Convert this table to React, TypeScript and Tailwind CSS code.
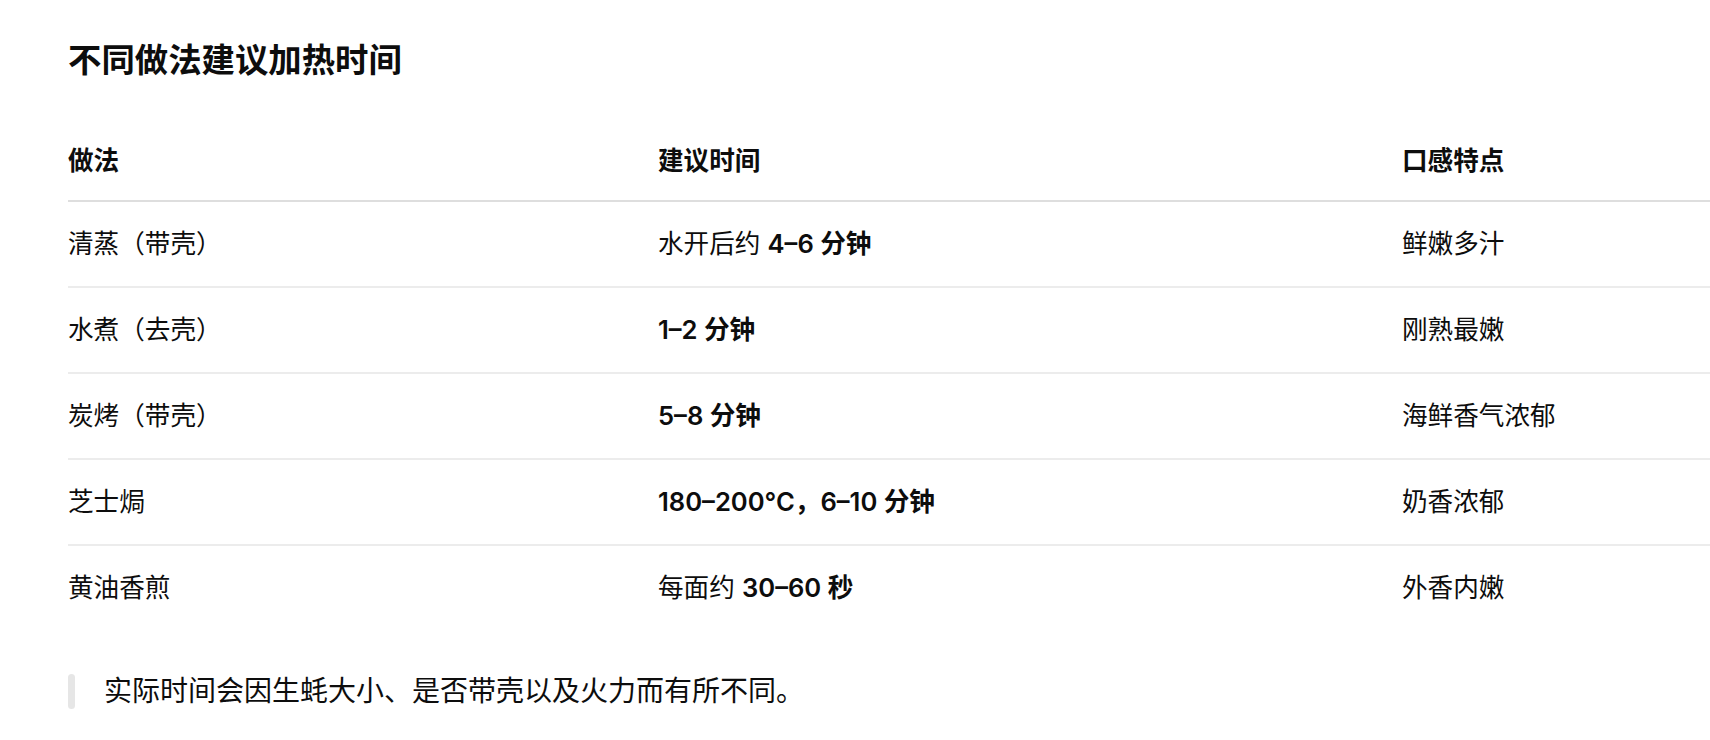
import React from "react";

const rows: { a: string; b: React.ReactNode; c: string }[] = [
  { a: "清蒸（带壳）", b: (<>水开后约 <strong className="font-semibold">4–6 分钟</strong></>), c: "鲜嫩多汁" },
  { a: "水煮（去壳）", b: <strong className="font-semibold">1–2 分钟</strong>, c: "刚熟最嫩" },
  { a: "炭烤（带壳）", b: <strong className="font-semibold">5–8 分钟</strong>, c: "海鲜香气浓郁" },
  { a: "芝士焗", b: <strong className="font-semibold">180–200°C，6–10 分钟</strong>, c: "奶香浓郁" },
  { a: "黄油香煎", b: (<>每面约 <strong className="font-semibold">30–60 秒</strong></>), c: "外香内嫩" },
];

export default function App() {
  return (
    <div
      className="w-[1710px] h-[740px] overflow-hidden bg-white text-[#0d0d0d] pl-[68px] pt-[38px]"
      style={{ fontFamily: 'Inter, "Noto Sans CJK SC", sans-serif' }}
    >
      <h2 className="text-[33.4px] leading-[44px] h-[44px] font-bold">不同做法建议加热时间</h2>
      <div className="mt-[40px] w-[1642px]">
        <div className="grid grid-cols-[590px_744px_1fr] h-[80px] items-center border-b-2 border-[#dedede] text-[25.6px] font-semibold">
          <div>做法</div>
          <div>建议时间</div>
          <div>口感特点</div>
        </div>
        {rows.map((r, i) => (
          <div
            key={i}
            className={
              "grid grid-cols-[590px_744px_1fr] items-center text-[25.6px] " +
              (i < rows.length - 1 ? "h-[86px] border-b-2 border-[#ececec]" : "h-[84px]")
            }
          >
            <div>{r.a}</div>
            <div>{r.b}</div>
            <div>{r.c}</div>
          </div>
        ))}
      </div>
      <div className="mt-[44px] flex items-stretch gap-[29px]">
        <div className="w-[7px] rounded-full bg-[#e6e6e6]" />
        <p className="text-[28px] leading-[35px]">实际时间会因生蚝大小、是否带壳以及火力而有所不同。</p>
      </div>
    </div>
  );
}
